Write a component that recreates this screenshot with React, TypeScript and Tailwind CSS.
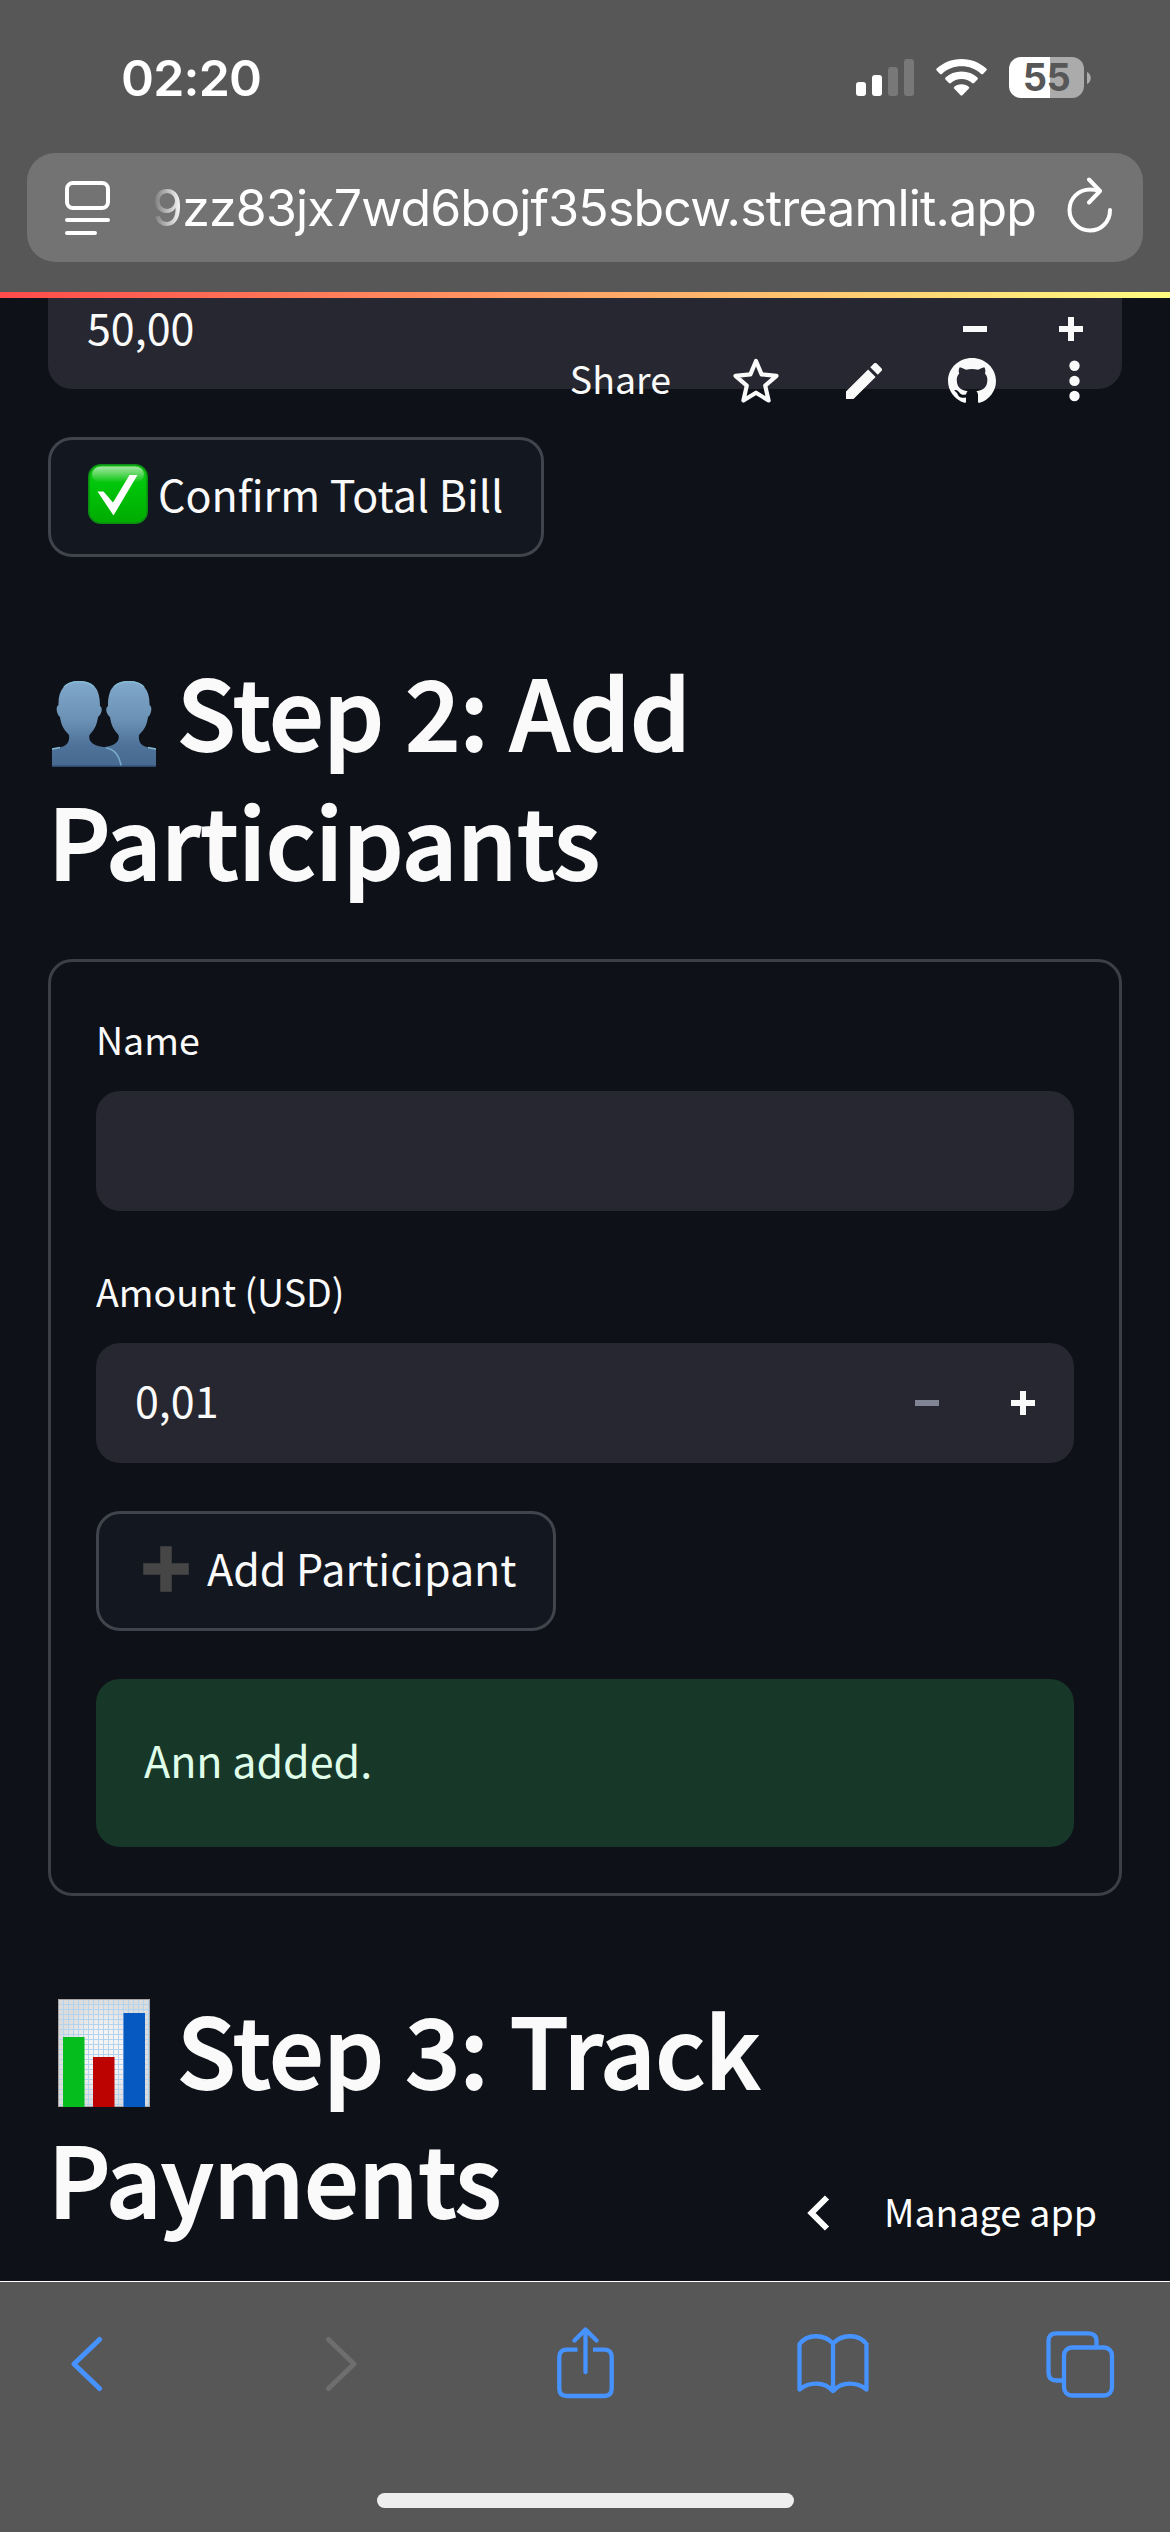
import React from "react";

const SANS = "font-['Noto_Sans_CJK_SC','Noto_Sans',sans-serif]";
const UI = "font-[Inter,Roboto,sans-serif]";

function StatusBar() {
  return (
    <div className="flex h-[153px] items-start justify-between pl-[121px] pr-[79px] pt-[57px]">
      <span className={`${UI} mt-px text-[50px] font-semibold leading-[41px] text-white tracking-[-0.800px]`}>02:20</span>
      <div className="flex items-start">
        <svg width="58" height="37" viewBox="0 0 58 37" className="mt-[2px]">
          <rect x="0" y="23" width="10" height="14" rx="3" fill="#fff" />
          <rect x="16" y="16" width="10" height="21" rx="3" fill="#fff" />
          <rect x="32" y="8" width="10" height="29" rx="3" fill="#787878" />
          <rect x="48" y="0" width="10" height="37" rx="3" fill="#787878" />
        </svg>
        <svg width="51" height="37" viewBox="0 0 51 37" className="ml-[22px] mt-[2px]" fill="#fff">
          <path d="M25.500 0C35.500 0 44 3.800 50.300 9.600Q51.200 10.500 50.300 11.500L47 14.900Q46.100 15.800 45.100 14.900C39.500 9.900 33 7.300 25.500 7.300S11.500 9.900 5.900 14.900Q4.900 15.800 4 14.900L.7 11.500Q-.2 10.500.7 9.600C7 3.800 15.500 0 25.500 0Z" />
          <path d="M25.500 12.600C31.800 12.600 37.300 14.800 41.500 18.600Q42.300 19.500 41.500 20.400L38 24Q37.100 24.900 36.100 24C33 21.300 29.700 20 25.500 20S18 21.300 14.900 24Q13.900 24.900 13 24L9.500 20.400Q8.700 19.500 9.500 18.600C13.700 14.800 19.200 12.600 25.500 12.600Z" />
          <path d="M25.500 25.300C28.600 25.300 31 26.300 32.900 27.900Q33.700 28.700 32.900 29.600L26.400 36.300Q25.500 37.200 24.600 36.300L18.100 29.600Q17.300 28.700 18.100 27.900C20 26.300 22.400 25.300 25.500 25.300Z" />
        </svg>
        <div className="ml-[22px] flex items-center">
          <div className="flex h-[41px] w-[75px] items-center justify-center rounded-[12px] bg-[linear-gradient(to_right,#fff_41px,#ababab_41px)]">
            <span className={`${UI} text-[38px] font-bold leading-[41px] text-[#575757] tracking-[-0.5px]`}>55</span>
          </div>
          <svg width="4" height="12" viewBox="0 0 4 12" className="ml-[3px]">
            <path d="M0 0C5 2 5 10 0 12Z" fill="#ababab" />
          </svg>
        </div>
      </div>
    </div>
  );
}

function AddressBar() {
  return (
    <div className="mx-[27px] flex h-[109px] items-center rounded-[28px] bg-[#737373] pl-[38px]">
      <svg width="45" height="54" viewBox="0 0 45 54" fill="none" stroke="#fff" strokeWidth="4" strokeLinecap="round">
        <rect x="2" y="2" width="41" height="25" rx="6" />
        <path d="M2 39H43M2 52H30" />
      </svg>
      <div className="ml-[42px] h-[70px] w-[895px] [mask-image:linear-gradient(to_right,transparent_0px,#000_30px)]">
        <span className={`${UI} block whitespace-nowrap text-[50px] leading-[70px] text-white tracking-[-0.820px]`}>
          9zz83jx7wd6bojf35sbcw.streamlit.app
        </span>
      </div>
      <svg width="46" height="56" viewBox="0 0 46 56" className="ml-[20px] -mt-[5px] shrink-0" fill="none" stroke="#fff" strokeWidth="4" strokeLinecap="round" strokeLinejoin="round">
        <path d="M43 33C43 45 34 53.500 23 53.500S2.500 44.500 2.500 33S11.500 12.500 23 12.500Q28 12.500 32.500 14" />
        <path d="M22 2.500L33 14L22 25.500" />
      </svg>
    </div>
  );
}

function Stepper({ value, disabledMinus }: { value: string; disabledMinus?: boolean }) {
  return (
    <div className="flex h-[64px] items-start justify-between pl-[39px] pr-[39px]">
      <span className={`${SANS} text-[43px] leading-[56px] text-[#fafafa]`}>{value}</span>
      <svg width="120" height="24" viewBox="0 0 120 24" className={disabledMinus ? "mt-[20px]" : "mt-[19px]"}>
        <path d="M0 9H24V15H0Z" fill={disabledMinus ? "#808495" : "#fafafa"} />
        <path d="M96 9H105V0H111V9H120V15H111V24H105V15H96Z" fill="#fafafa" />
      </svg>
    </div>
  );
}

function AppActions() {
  return (
    <div className="absolute right-[90px] top-[350px] flex h-[62px] items-center">
      <span className={`${SANS} pb-[6px] text-[37.500px] leading-[56px] text-[#fafafa]`}>Share</span>
      <svg width="46" height="46" viewBox="0 0 46 46" className="ml-[62px]" fill="none" stroke="#fafafa" strokeWidth="4.200" strokeLinejoin="round">
        <path d="M23 3L28.600 16.400L43.500 17.800L32.200 27.600L35.600 42.500L23 34.700L10.400 42.500L13.800 27.600L2.500 17.800L17.400 16.400Z" />
      </svg>
      <svg width="36" height="36" viewBox="3 3 18 18" className="ml-[67px]" fill="#fafafa">
        <path d="M3 17.250V21h3.750L17.810 9.940l-3.750-3.750L3 17.250zM20.710 7.040a1 1 0 0 0 0-1.410l-2.340-2.340a1 1 0 0 0-1.410 0l-1.830 1.830 3.750 3.750 1.830-1.830z" />
      </svg>
      <svg width="48" height="46" viewBox="0 0 16 16" preserveAspectRatio="none" className="ml-[66px]" fill="#fafafa">
        <path d="M8 0C3.580 0 0 3.580 0 8c0 3.540 2.290 6.530 5.470 7.590.4.070.55-.17.55-.38 0-.19-.01-.82-.01-1.490-2.010.37-2.530-.49-2.690-.94-.09-.23-.48-.94-.82-1.130-.28-.15-.68-.52-.01-.53.63-.01 1.080.58 1.230.82.720 1.210 1.870.87 2.330.66.070-.52.280-.87.510-1.070-1.780-.2-3.640-.89-3.640-3.950 0-.87.310-1.590.82-2.150-.08-.2-.36-1.020.08-2.120 0 0 .67-.21 2.200.82.640-.18 1.320-.27 2-.27s1.360.09 2 .27c1.530-1.040 2.200-.82 2.200-.82.440 1.100.16 1.920.08 2.120.51.560.82 1.270.82 2.150 0 3.070-1.870 3.750-3.650 3.950.29.250.54.730.54 1.480 0 1.070-.01 1.930-.01 2.200 0 .21.150.46.550.38A8.010 8.010 0 0 0 16 8c0-4.420-3.580-8-8-8z" />
      </svg>
      <svg width="11" height="42" viewBox="0 0 11 42" className="ml-[73px]" fill="#fafafa">
        <circle cx="5.500" cy="5.700" r="5.200" />
        <circle cx="5.500" cy="20.900" r="5.200" />
        <circle cx="5.500" cy="36" r="5.200" />
      </svg>
    </div>
  );
}

function CheckEmoji() {
  return (
    <svg width="60" height="60" viewBox="0 0 60 60" className="mb-[6px]">
      <defs>
        <linearGradient id="checkFill" x1="0" y1="0" x2="0" y2="1">
          <stop offset="0" stopColor="#1cc41c" />
          <stop offset=".35" stopColor="#00c60a" />
          <stop offset="1" stopColor="#00ab00" />
        </linearGradient>
        <linearGradient id="checkGloss" x1="0" y1="0" x2="0" y2="1">
          <stop offset="0" stopColor="#fff" stopOpacity=".6" />
          <stop offset="1" stopColor="#fff" stopOpacity="0" />
        </linearGradient>
      </defs>
      <rect x=".8" y=".8" width="58.400" height="58.400" rx="12" fill="url(#checkFill)" stroke="#0a8d12" strokeWidth="1.600" />
      <rect x="4" y="2.500" width="52" height="16" rx="9" fill="url(#checkGloss)" />
      <path d="M9.500 27.500H15.500L25 38.500L41.500 11H49.500L25.500 51.500Z" fill="#fff" />
    </svg>
  );
}

function PeopleEmoji() {
  const head = "M27 0C13 0 6 9 6.500 24C3 26 5 34 8 36C9 44 12 49 17 54C18 62 14 65 8 66.500L0 68V86H68V72C66 69 62 67 54 66.500C40 65 36 60 37.500 54C42 49 45 44 46 36C50 33 51 27 48 25C48 8 42 0 27 0Z";
  return (
    <svg width="104" height="86" viewBox="0 0 104 86">
      <defs>
        <linearGradient id="bust" x1="0" y1="0" x2="0" y2="86" gradientUnits="userSpaceOnUse">
          <stop offset="0" stopColor="#81a9cb" />
          <stop offset=".45" stopColor="#6b91b4" />
          <stop offset=".75" stopColor="#4e7299" />
          <stop offset="1" stopColor="#47698f" />
        </linearGradient>
      </defs>
      <path d={head} fill="url(#bust)" />
      <g transform="translate(104 0) scale(-1 1)">
        <path d={head} fill="url(#bust)" />
      </g>
      <path d="M54 67C63 68 68 76 69 85" fill="none" stroke="#79adc9" strokeWidth="1.500" />
      <path d="M0 68L8 66.500M104 68L96 66.500M12 6C16 1 22 .7 27 .7S37 1 42 6M62 6C66 1 72 .7 77 .7S88 1 92 6" fill="none" stroke="#86bbd4" strokeWidth="1.400" />
      <path d="M0 85.200H104" stroke="#2c4a6c" strokeWidth="1.600" />
    </svg>
  );
}

function ChartEmoji() {
  return (
    <svg width="92" height="108" viewBox="0 0 92 108">
      <defs>
        <pattern id="graph" width="5" height="5" patternUnits="userSpaceOnUse">
          <path d="M0 .5H5M.5 0V5" stroke="#b4d3ee" strokeWidth="1" />
        </pattern>
        <radialGradient id="paper">
          <stop offset=".4" stopColor="#f4f4f4" />
          <stop offset="1" stopColor="#dcdcdc" />
        </radialGradient>
      </defs>
      <rect width="92" height="108" fill="url(#paper)" />
      <rect width="92" height="108" fill="url(#graph)" />
      <rect x=".5" y=".5" width="91" height="107" fill="none" stroke="#a9a5a5" />
      <rect x="5" y="38" width="21.500" height="70" fill="#05bd1c" />
      <rect x="35" y="58" width="21.500" height="50" fill="#bd0202" />
      <rect x="65.500" y="14" width="21.500" height="94" fill="#0559c1" />
    </svg>
  );
}

function TextField() {
  return <div className="mt-[20px] h-[120px] rounded-[24px] bg-[#262730]" />;
}

function Heading({ icon, first, second, gap }: { icon: React.ReactNode; first: string; second: string; gap: string }) {
  return (
    <h2 className={`${SANS} text-[96.500px] font-medium leading-[129px] tracking-[-0.300px] text-[#fafafa] whitespace-nowrap [-webkit-text-stroke:1.800px_#fafafa]`}>
      <span className={`flex h-[129px] ${gap}`}>
        {icon}
        <span>{first}</span>
      </span>
      <span className="block">{second}</span>
    </h2>
  );
}

function BrowserToolbar() {
  return (
    <div className="h-[251px] border-t border-white bg-[#575757]">
      <div className="flex h-[163px] items-center pl-[70px] pt-px">
        <svg width="33" height="56" viewBox="0 0 33 56" fill="none" stroke="#4693ff" strokeWidth="5" strokeLinecap="round" strokeLinejoin="round">
          <path d="M29.500 3.500L4 28L29.500 52.500" />
        </svg>
        <svg width="33" height="56" viewBox="0 0 33 56" className="ml-[222px]" fill="none" stroke="#6e6e6e" strokeWidth="5" strokeLinecap="round" strokeLinejoin="round">
          <path d="M3.500 3.500L29 28L3.500 52.500" />
        </svg>
        <svg width="57" height="72" viewBox="0 0 57 72" className="mb-[3px] ml-[199px]" fill="none" stroke="#4693ff" strokeWidth="4.300" strokeLinecap="round" strokeLinejoin="round">
          <path strokeLinecap="butt" d="M20.500 22.600H10Q2.300 22.600 2.300 30V61.500Q2.300 69 10 69H47Q54.700 69 54.700 61.500V30Q54.700 22.600 47 22.600H36" />
          <path d="M28.500 45V3M17.500 13.500L28.500 2.500L39.500 13.500" />
        </svg>
        <svg width="72" height="60" viewBox="0 0 72 60" className="ml-[183px]" fill="none" stroke="#4693ff" strokeWidth="4.300" strokeLinecap="round" strokeLinejoin="round">
          <path d="M36 9.500C27 -.5 10 0 2.500 10V55.500C12 48 27 47 36 57C45 47 60 48 69.500 55.500V10C62 0 45 -.5 36 9.500ZM36 9.500V57" />
        </svg>
        <svg width="69" height="67" viewBox="0 0 69 67" className="ml-[177px]" fill="none" stroke="#4693ff" strokeWidth="4.300">
          <rect x="18" y="16.500" width="48" height="48" rx="8" />
          <path d="M50.500 16V10Q50.500 2.300 42.500 2.300H10.500Q2.500 2.300 2.500 10V41.500Q2.500 49.500 10.500 49.500H17" />
        </svg>
      </div>
      <div className="mx-auto mt-[48px] h-[15px] w-[417px] rounded-full bg-[#eee]" />
    </div>
  );
}

export default function App() {
  return (
    <div className="relative flex h-[2532px] w-[1170px] flex-col overflow-hidden bg-[#0e1118]">
      <header className="h-[292px] shrink-0 bg-[#575757]">
        <StatusBar />
        <AddressBar />
      </header>
      <div className="h-[6px] shrink-0 bg-[linear-gradient(to_right,#ff4b4b,#fffd80)]" />

      <main className="h-[1983px] shrink-0 px-[48px]">
        <div className="h-[91px] rounded-b-[24px] bg-[#262730]">
          <Stepper value="50,00" />
        </div>

        <button className="mt-[48px] flex h-[120px] w-[496px] items-center rounded-[24px] border-[3px] border-[#41444c] bg-[#131720] pl-[37px]">
          <CheckEmoji />
          <span className={`${SANS} ml-[10px] pb-[9px] text-[43px] leading-[64px] text-[#fafafa] whitespace-nowrap`}>Confirm Total Bill</span>
        </button>

        <div className="mt-[88px]">
          <Heading icon={<span className="mt-[36px] mr-[21px] flex h-[86px]"><PeopleEmoji /></span>} first="Step 2: Add" second="Participants" gap="pl-[4px]" />
        </div>

        <section className="mt-[56px] h-[937px] rounded-[24px] border-[3px] border-[#3d3f44] px-[45px] pt-[45px]">
          <label className={`${SANS} block h-[64px] text-[37.500px] leading-[64px] text-[#fafafa]`}>Name</label>
          <TextField />
          <label className={`${SANS} mt-[48px] block h-[64px] text-[37.500px] leading-[64px] text-[#fafafa]`}>Amount (USD)</label>
          <div className="mt-[20px] h-[120px] rounded-[24px] bg-[#262730] pt-[28px]">
            <Stepper value="0,01" disabledMinus />
          </div>
          <button className="mt-[48px] flex h-[120px] w-[460px] items-center rounded-[24px] border-[3px] border-[#41444c] bg-[#131720] pl-[44px]">
            <svg width="46" height="46" viewBox="0 0 46 46" className="-mt-[4px]">
              <path d="M.5 17.500H17.500V.5H28.500V17.500H45.500V28.500H28.500V45.500H17.500V28.500H.5Z" fill="#464646" stroke="#3a3a3c" />
            </svg>
            <span className={`${SANS} ml-[18px] pb-[9px] text-[43px] leading-[64px] text-[#fafafa] whitespace-nowrap`}>Add Participant</span>
          </button>
          <div className="mt-[48px] flex h-[168px] items-center rounded-[24px] bg-[#173829] pl-[48px]">
            <span className={`${SANS} pb-[8px] text-[43px] leading-[64px] text-[#dffde9]`}>Ann added.</span>
          </div>
        </section>

        <div className="mt-[87px]">
          <Heading icon={<span className="mt-[16px] mr-[27px] flex h-[108px]"><ChartEmoji /></span>} first="Step 3: Track" second="Payments" gap="pl-[10px]" />
        </div>
      </main>

      <BrowserToolbar />
      <AppActions />
      <div className="absolute right-[73px] top-[2182px] flex h-[62px] items-center text-white">
        <svg width="23" height="36" viewBox="0 0 23 36" className="mr-[54px]" fill="none" stroke="#fff" strokeWidth="6">
          <path d="M20 2.500L4.500 18L20 33.500" />
        </svg>
        <span className={`${SANS} pb-[4px] text-[37.500px] leading-[58px]`}>Manage app</span>
      </div>
    </div>
  );
}
